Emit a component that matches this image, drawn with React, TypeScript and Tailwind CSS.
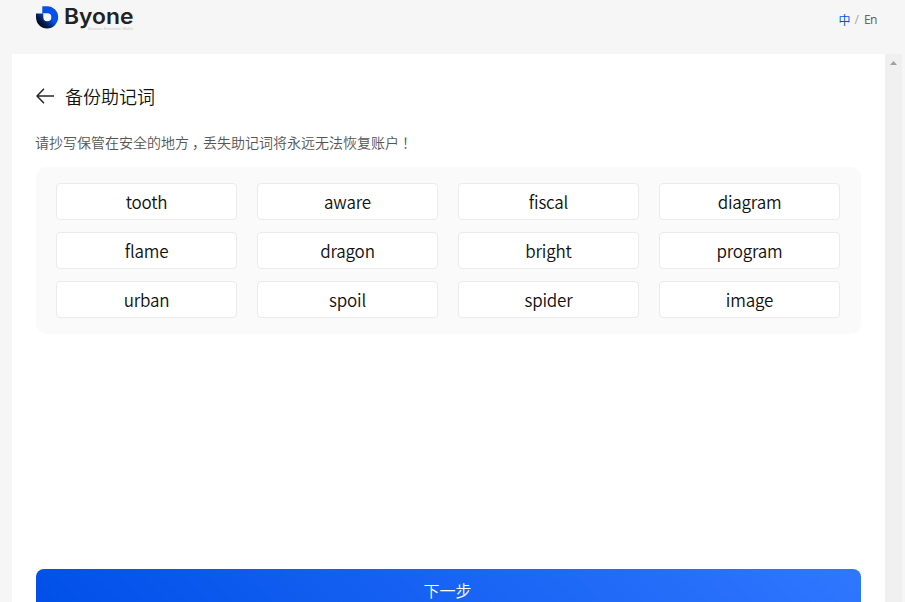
const words = [
  'tooth', 'aware', 'fiscal', 'diagram',
  'flame', 'dragon', 'bright', 'program',
  'urban', 'spoil', 'spider', 'image',
];

function Logo() {
  return (
    <svg width="100" height="30" viewBox="0 0 100 30" className="block" role="img" aria-label="Byone">
      <defs>
        <linearGradient id="ring" gradientUnits="userSpaceOnUse" x1="3" y1="22" x2="15" y2="10">
          <stop offset="0" stopColor="#020b1c" />
          <stop offset="0.3" stopColor="#031b4d" />
          <stop offset="0.75" stopColor="#0552e8" />
        </linearGradient>
      </defs>
      <path
        d="M6.3 3.2H11.2A11.1 11.1 0 1 1 0 14.3V10.4H7.3V14.2A4 4 0 1 0 11.3 10.2H6.3Z"
        fill="url(#ring)"
      />
      <text x="28" y="21.4" textLength="69.5" lengthAdjust="spacingAndGlyphs" fill="#222224" fontFamily="Inter, sans-serif" fontWeight="600" fontSize="21.5">Byone</text>
      <text x="52" y="27" textLength="45" lengthAdjust="spacingAndGlyphs" fill="#c8c8c8" fontFamily="'Liberation Sans', sans-serif" fontSize="4">Browser Extension Wallet</text>
    </svg>
  );
}

function Header() {
  return (
    <header className="flex h-[54px] items-start justify-between pl-9 pr-[28px] pt-[3px]">
      <Logo />
      <nav className="mt-[8px] flex items-center font-['Noto_Sans','Noto_Sans_CJK_SC',sans-serif] text-[12px] leading-[18px] text-[#666]">
        <span className="font-['Noto_Sans_CJK_SC',sans-serif] text-[#0652e8]">中</span>
        <span className="ml-[4px] mr-[5px] text-[#aaa]">/</span>
        <span className="tracking-[-0.5px]">En</span>
      </nav>
    </header>
  );
}

function Scrollbar() {
  return (
    <div className="flex w-[17px] shrink-0 justify-center bg-[#f0f0f0] pt-[7px]">
      <svg width="7" height="4" viewBox="0 0 7 4" className="block">
        <path d="M0 4L3.5 0L7 4Z" fill="#a0a0a0" />
      </svg>
    </div>
  );
}

function Hint() {
  return (
    <p className="-ml-px mt-[24px] h-5 font-['Noto_Sans_CJK_SC',sans-serif] text-[14px] font-[350] leading-5 text-[#555]">
      请抄写保管在安全的地方<span className="-mr-[3px] pl-[3px]">，</span>丢失助记词将永远无法恢复账户<span className="pl-[3px]">！</span>
    </p>
  );
}

export default function App() {
  return (
    <div className="flex h-[602px] w-[905px] flex-col overflow-hidden bg-[#f6f6f6] font-['Noto_Sans_CJK_SC',sans-serif]">
      <Header />
      <div className="flex min-h-0 flex-1 pl-3">
        <main className="flex w-[873px] flex-col overflow-hidden bg-white px-6 pt-[30px]">
          <div className="flex h-6 items-center">
            <svg width="19" height="16" viewBox="0 0 19 16" fill="none" stroke="#25252f" strokeWidth="1.5" className="block">
              <path d="M8 .8L1 8L8 15.2M1 8H18" />
            </svg>
            <h1 className="ml-[10px] text-[18px] font-[350] leading-6 text-[#111]">备份助记词</h1>
          </div>
          <Hint />
          <div className="mt-[15px] grid h-[167px] shrink-0 grid-cols-4 content-start gap-x-5 gap-y-3 rounded-[10px] bg-[#fafafa] pb-4 pl-5 pr-[21px] pt-4">
            {words.map((word) => (
              <div key={word} className="flex h-[37px] items-center justify-center rounded border border-[#ebebeb] bg-white text-[17px] font-[350] tracking-[-0.2px] text-[#111]">
                {word}
              </div>
            ))}
          </div>
          <button className="mt-[235px] h-11 shrink-0 rounded-lg bg-[linear-gradient(45deg,#004fe8_0%,#3077ff_100%)] pb-[2px] pr-[2px] text-[16px] font-[350] leading-[42px] text-white">下一步</button>
        </main>
        <Scrollbar />
      </div>
    </div>
  );
}
